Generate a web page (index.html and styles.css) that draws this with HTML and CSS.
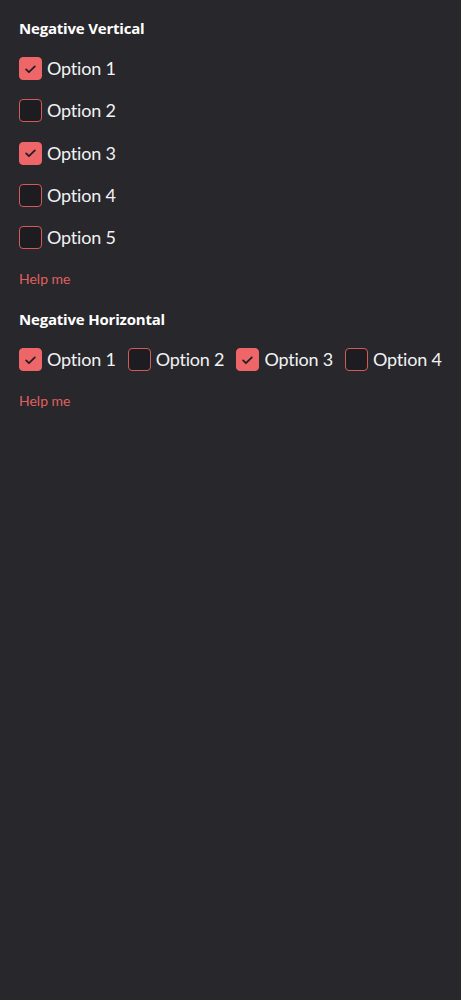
FILE: index.html
```html
<!DOCTYPE html>
<html>
<head>
<meta charset="utf-8">
<link rel="stylesheet" href="styles.css">
</head>
<body>
<main class="page">
  <section class="group">
    <h2 class="title">Negative Vertical</h2>
    <div class="options vertical">
      <label class="option"><span class="box checked"><svg viewBox="0 0 24 24"><path d="M7 12.5l3.2 3.2L17 9"/></svg></span><span class="text">Option 1</span></label>
      <label class="option"><span class="box"></span><span class="text">Option 2</span></label>
      <label class="option"><span class="box checked"><svg viewBox="0 0 24 24"><path d="M7 12.5l3.2 3.2L17 9"/></svg></span><span class="text">Option 3</span></label>
      <label class="option"><span class="box"></span><span class="text">Option 4</span></label>
      <label class="option"><span class="box"></span><span class="text">Option 5</span></label>
    </div>
    <p class="help">Help me</p>
  </section>
  <section class="group">
    <h2 class="title">Negative Horizontal</h2>
    <div class="options horizontal">
      <label class="option"><span class="box checked"><svg viewBox="0 0 24 24"><path d="M7 12.5l3.2 3.2L17 9"/></svg></span><span class="text">Option 1</span></label>
      <label class="option"><span class="box"></span><span class="text">Option 2</span></label>
      <label class="option"><span class="box checked"><svg viewBox="0 0 24 24"><path d="M7 12.5l3.2 3.2L17 9"/></svg></span><span class="text">Option 3</span></label>
      <label class="option"><span class="box"></span><span class="text">Option 4</span></label>
    </div>
    <p class="help">Help me</p>
  </section>
</main>
</body>
</html>
```

FILE: styles.css
```css
html, body {
  margin: 0;
  padding: 0;
  background: #27272c;
}
body {
  font-family: Lato, "Noto Sans", sans-serif;
  color: #f2f2f4;
}
.page {
  padding: 17px 19px;
}
.group {
  display: flex;
  flex-direction: column;
}
.title {
  margin: 0;
  font-family: "Open Sans", "Noto Sans", sans-serif;
  font-size: 15px;
  font-weight: 700;
  line-height: 22px;
  letter-spacing: -0.2px;
  color: #ffffff;
}
.options {
  display: flex;
}
.vertical {
  flex-direction: column;
  margin-top: 18px;
  gap: 19.25px;
}
.horizontal {
  flex-direction: row;
  gap: 12px;
  margin-top: 18px;
  overflow: hidden;
  white-space: nowrap;
}
.option {
  display: flex;
  align-items: center;
  gap: 5px;
  height: 23px;
  flex-shrink: 0;
}
.box {
  box-sizing: border-box;
  width: 23px;
  height: 23px;
  border-radius: 4px;
  border: 1.5px solid #d5585b;
  background: #1d1d21;
  display: flex;
  align-items: center;
  justify-content: center;
}
.box.checked {
  background: #ef6668;
  border-color: #ef6668;
}
.box svg {
  width: 22px;
  height: 22px;
  fill: none;
  stroke: #1f1f23;
  stroke-width: 2;
  stroke-linecap: round;
  stroke-linejoin: round;
}
.text {
  font-size: 18px;
  line-height: 23px;
  letter-spacing: -0.2px;
}
.help {
  margin: 21px 0 20px;
  font-size: 14px;
  line-height: 18px;
  color: #e0605f;
}
.horizontal + .help {
  margin-top: 21px;
}
```
